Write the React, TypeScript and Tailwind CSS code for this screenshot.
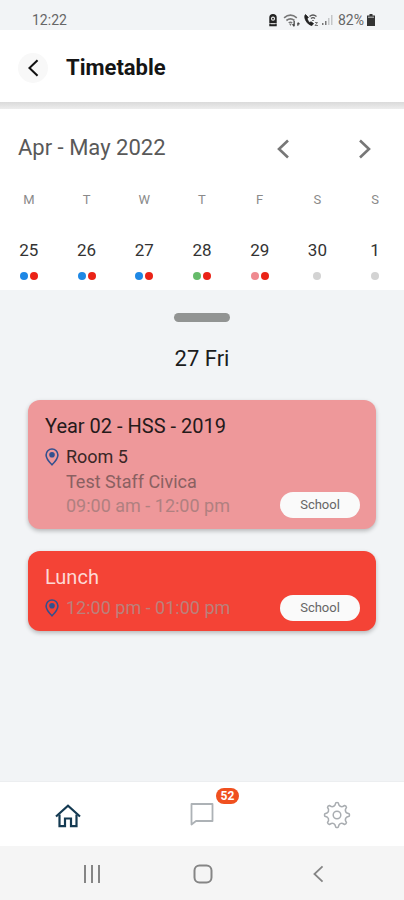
import type { ReactNode } from "react";

type Day = { letter: string; date: number; dots: string[] };

const BLUE = "bg-[#1e88e5]";
const RED = "bg-[#ea2317]";
const GREEN = "bg-[#66bb6a]";
const PINK = "bg-[#ef8a90]";
const GREY = "bg-[#d3d3d3]";

const days: Day[] = [
  { letter: "M", date: 25, dots: [BLUE, RED] },
  { letter: "T", date: 26, dots: [BLUE, RED] },
  { letter: "W", date: 27, dots: [BLUE, RED] },
  { letter: "T", date: 28, dots: [GREEN, RED] },
  { letter: "F", date: 29, dots: [PINK, RED] },
  { letter: "S", date: 30, dots: [GREY] },
  { letter: "S", date: 1, dots: [GREY] },
];

// Outline of an eight-toothed gear centred on 14,14.
const gearPath = (() => {
  const at = (radius: number, degrees: number) => {
    const a = (degrees * Math.PI) / 180;
    return `${(14 + radius * Math.cos(a)).toFixed(2)} ${(14 + radius * Math.sin(a)).toFixed(2)}`;
  };
  let d = "";
  for (let i = 0; i < 8; i++) {
    const c = i * 45;
    d += `${i === 0 ? "M" : "L"}${at(10.2, c - 11)}L${at(12.2, c - 6)}Q${at(13, c)} ${at(12.2, c + 6)}L${at(10.2, c + 11)}Q${at(8.6, c + 22.5)} ${at(10.2, c + 34)}`;
  }
  return d + "Z";
})();

function Chevron({ right = false, className }: { right?: boolean; className: string }) {
  return (
    <svg viewBox="0 0 12 20" fill="none" stroke="currentColor" className={className} aria-hidden="true">
      <path d={right ? "M1.5 1.5 10.5 10l-9 8.5" : "M10.5 1.5 1.5 10l9 8.5"} />
    </svg>
  );
}

function Pin() {
  return (
    <svg viewBox="0 0 14 18" className="h-[18px] w-[14px] shrink-0 text-[#33508f]" aria-hidden="true">
      <path d="M7 1a5.9 5.9 0 0 0-5.9 5.9C1.1 10.8 7 16.8 7 16.8s5.9-6 5.9-9.9A5.9 5.9 0 0 0 7 1Z" fill="none" stroke="currentColor" strokeWidth="1.6" />
      <circle cx="7" cy="6.8" r="2.8" fill="currentColor" />
    </svg>
  );
}

function SchoolTag() {
  return (
    <span className="flex h-[26px] w-20 shrink-0 items-center justify-center rounded-full bg-[#fafafa] text-[13px] text-[#666]">
      School
    </span>
  );
}

function StatusBar() {
  return (
    <div className="flex h-[30px] items-end justify-between bg-[#f2f4f6] pr-[29px] pl-8 text-sm leading-5 text-[#666]">
      <span>12:22</span>
      <div className="flex items-center gap-[3px]">
        <svg viewBox="0 0 10 14" className="h-[13px] w-[10px]" aria-hidden="true">
          <path d="M1 4a4 4 0 0 1 8 0v6H1Z" fill="#222" />
          <circle cx="5" cy="5" r="2.2" fill="#eee" />
          <circle cx="5" cy="5" r="1" fill="#222" />
          <path d="M1 10.5h8v2.7H1Z" fill="#222" />
          <path d="M2.5 10.5h5" stroke="#eee" />
        </svg>
        <svg viewBox="0 0 16 14" className="ml-[2px] h-[15px] w-[17px]" fill="none" aria-hidden="true">
          <path d="M1 4.5Q7 -.5 13 4.5M3.2 7Q7 4 10.8 7M5.4 9.3Q7 8 8.6 9.3" stroke="#777" strokeWidth="1.5" />
          <path d="M7 12.2 5.8 10h2.4Z" fill="#777" />
          <path d="M10.5 7.5v5m0 0-1.5-2m5-1.5v3m0-3 1.5 1.5" stroke="#444" strokeWidth="1.2" />
        </svg>
        <svg viewBox="0 0 16 14" className="h-[14px] w-4" fill="none" aria-hidden="true">
          <path d="M2.5 1.5C0 4 4 12 9 12.5l1.5-2-2.5-1.7-1.3.8C5.5 8.5 4.5 7 4.2 5.500l1.200-1Z" fill="#222" stroke="#222" strokeWidth=".8" />
          <path d="M6.5 3.5Q10 .5 13.5 3.5M8 5.5Q10 3.7 12 5.5" stroke="#555" strokeWidth="1.3" />
          <path d="M10 7v1" stroke="#555" strokeWidth="1.5" />
          <path d="M12 9.5h2.5L12 12.5h3" stroke="#777" />
        </svg>
        <svg viewBox="0 0 11 12" className="h-3 w-[11px]" aria-hidden="true">
          <path d="M0 9h1.5v2H0ZM3 7h1.5v4H3Z" fill="#777" />
          <path d="M6 4h1.5v7H6ZM9 1h1.5v10H9Z" fill="#c4c6c8" />
        </svg>
        <span className="ml-[2px]">82%</span>
        <svg viewBox="0 0 8 12" className="h-3 w-2" fill="#333" aria-hidden="true">
          <path d="M2.5 0h3v1.5H8V12H0V1.5h2.5Z" />
          <path d="M1 2.5h6V4H1Z" fill="#999" />
        </svg>
      </div>
    </div>
  );
}

function Card({ className, children }: { className: string; children: ReactNode }) {
  return (
    <article className={`flex items-end justify-between rounded-xl pr-4 pl-[17px] shadow-[0_2px_4px_rgba(0,0,0,0.25)] ${className}`}>
      {children}
    </article>
  );
}

export default function App() {
  return (
    <div className="flex min-h-screen flex-col bg-[#f2f4f6] font-['Roboto',sans-serif]">
      <StatusBar />

      <header className="flex h-[72px] items-center gap-[18px] bg-white px-[18px] pt-[3px]">
        <button type="button" aria-label="Back" className="flex size-[30px] items-center justify-center rounded-full bg-[#f8f8f8] text-[#111]">
          <Chevron className="h-[18px] w-[11px] stroke-[2.3px]" />
        </button>
        <h1 className="text-[22px] leading-7 font-bold text-[#151515]">Timetable</h1>
      </header>
      <div className="h-[7px] bg-linear-to-b from-[#dadada] to-[#ededed]" />

      <section className="h-[181px] bg-white pt-6">
        <div className="flex h-7 items-center justify-between pr-[33px] pl-[18px]">
          <h2 className="text-[22px] text-[#595959]">Apr - May 2022</h2>
          <div className="flex gap-[68px] pt-[3px] text-[#777]">
            <button type="button" aria-label="Previous">
              <Chevron className="h-5 w-[13px] stroke-[2.6px]" />
            </button>
            <button type="button" aria-label="Next">
              <Chevron right className="h-5 w-[13px] stroke-[2.6px]" />
            </button>
          </div>
        </div>
        <div className="mt-[29px] grid grid-cols-7">
          {days.map((day, i) => (
            <button key={i} type="button" className="flex flex-col items-center">
              <span className="text-[13px] leading-5 text-[#8a8a8a]">{day.letter}</span>
              <span className="mt-7 text-[17px] leading-6 text-[#333]">{day.date}</span>
              <span className="mt-[10px] flex gap-[2px]">
                {day.dots.map((dot) => (
                  <span key={dot} className={`size-2 rounded-full ${dot}`} />
                ))}
              </span>
            </button>
          ))}
        </div>
      </section>

      <main className="flex grow flex-col px-7 pt-[23px]">
        <div className="mx-auto h-[9px] w-14 rounded-full bg-[#929493]" />
        <h2 className="mt-[23px] text-center text-[22px] leading-7 text-[#1c1c1c]">27 Fri</h2>

        <Card className="mt-[27px] bg-[#ee989a] pt-3 pb-[11px]">
          <div>
            <h3 className="text-xl leading-7 text-[#251a1a]">Year 02 - HSS - 2019</h3>
            <div className="mt-1 flex items-center gap-[7px]">
              <Pin />
              <p className="text-lg leading-[26px] text-[#3a2626]">Room 5</p>
            </div>
            <div className="pl-[21px] text-lg leading-6">
              <p className="text-[#8a6061]">Test Staff Civica</p>
              <p className="text-[#b08080]">09:00 am - 12:00 pm</p>
            </div>
          </div>
          <SchoolTag />
        </Card>

        <Card className="mt-[22px] bg-[#f44336] pt-3 pb-[10px]">
          <div>
            <h3 className="text-xl leading-7 text-[#fdd9d5]">Lunch</h3>
            <div className="mt-1 flex items-center gap-[7px]">
              <Pin />
              <p className="text-lg leading-[26px] text-[#bb807b]">12:00 pm - 01:00 pm</p>
            </div>
          </div>
          <SchoolTag />
        </Card>
      </main>

      <nav className="grid h-[65px] grid-cols-3 border-t border-[#eceef0] bg-white" aria-label="Main">
        <a href="#home" aria-label="Home" className="flex items-center justify-center">
          <svg viewBox="0 0 26 24" className="mt-1 ml-[2px] h-6 w-[26px]" fill="none" stroke="#143a52" strokeWidth="2.2" aria-hidden="true">
            <path d="M1 12.5 13 1.8l12 10.7" />
            <path d="M4.5 10.5v11.700H10V14.500h6v7.700h5.500V10.500" />
          </svg>
        </a>
        <a href="#messages" aria-label="Messages, 52 unread" className="flex items-center justify-center">
          <span className="relative">
            <svg viewBox="0 0 24 24" className="size-6" fill="none" stroke="#adb2b6" strokeWidth="1.8" strokeLinejoin="round" aria-hidden="true">
              <path d="M1.5 2h21v17H6l-4.500 3.500Z" />
            </svg>
            <span className="absolute -top-[14px] left-[26px] flex h-4 w-[23px] items-center justify-center rounded-full bg-[#f0501f] text-xs font-bold text-white">
              52
            </span>
          </span>
        </a>
        <a href="#settings" aria-label="Settings" className="flex items-center justify-center">
          <svg viewBox="0 0 28 28" className="mt-[2px] size-7" fill="none" stroke="#a9adb1" strokeWidth="1.5" strokeLinejoin="round" aria-hidden="true">
            <path d={gearPath} />
            <circle cx="14" cy="14" r="3.8" />
          </svg>
        </a>
      </nav>

      <div className="grid h-[54px] grid-cols-[1fr_20px_1fr] items-center bg-[#f5f5f5] pr-[80px] pl-[82px] pt-[2px] text-[#858585]">
        <button type="button" aria-label="Recent apps" className="justify-self-start">
          <svg viewBox="0 0 20 18" className="h-[18px] w-5" stroke="currentColor" strokeWidth="2" aria-hidden="true">
            <path d="M3 0v18M10 0v18M17 0v18" />
          </svg>
        </button>
        <button type="button" aria-label="Home screen" className="justify-self-center">
          <svg viewBox="0 0 20 20" className="size-5" fill="none" stroke="currentColor" strokeWidth="2" aria-hidden="true">
            <rect x="1.5" y="1.5" width="17" height="17" rx="5" />
          </svg>
        </button>
        <button type="button" aria-label="System back" className="justify-self-end">
          <Chevron className="h-[18px] w-[11px] stroke-2" />
        </button>
      </div>
    </div>
  );
}
